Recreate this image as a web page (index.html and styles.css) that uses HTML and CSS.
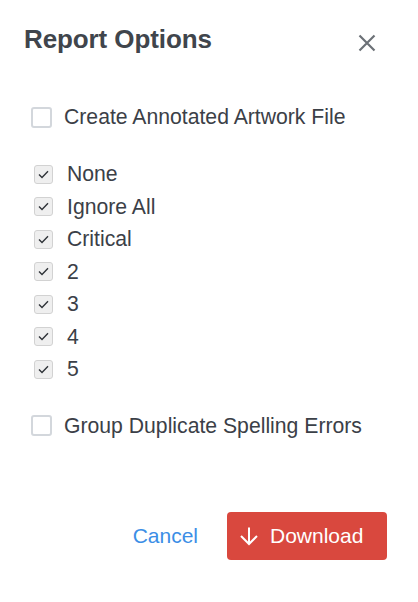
FILE: index.html
```html
<!DOCTYPE html>
<html>
<head>
<meta charset="utf-8">
<link rel="stylesheet" href="styles.css">
</head>
<body>
<div class="dialog">
  <header class="head">
    <h1 class="title">Report Options</h1>
    <button class="close" aria-label="Close">
      <svg width="18" height="18" viewBox="0 0 18 18"><path d="M1.5 1.5 L16.5 16.5 M16.5 1.5 L1.5 16.5" stroke="#6c7177" stroke-width="2.2" stroke-linecap="butt" fill="none"/></svg>
    </button>
  </header>

  <div class="body">
    <label class="opt first"><span class="box"></span><span class="label">Create Annotated Artwork File</span></label>

    <ul class="levels">
      <li class="level"><span class="cbox"><svg width="11" height="9" viewBox="0 0 11 9"><path d="M1 4.5 L4 7.4 L10 1.2" stroke="#2f3338" stroke-width="1.4" fill="none"/></svg></span><span class="label">None</span></li>
      <li class="level"><span class="cbox"><svg width="11" height="9" viewBox="0 0 11 9"><path d="M1 4.5 L4 7.4 L10 1.2" stroke="#2f3338" stroke-width="1.4" fill="none"/></svg></span><span class="label">Ignore All</span></li>
      <li class="level"><span class="cbox"><svg width="11" height="9" viewBox="0 0 11 9"><path d="M1 4.5 L4 7.4 L10 1.2" stroke="#2f3338" stroke-width="1.4" fill="none"/></svg></span><span class="label">Critical</span></li>
      <li class="level"><span class="cbox"><svg width="11" height="9" viewBox="0 0 11 9"><path d="M1 4.5 L4 7.4 L10 1.2" stroke="#2f3338" stroke-width="1.4" fill="none"/></svg></span><span class="label">2</span></li>
      <li class="level"><span class="cbox"><svg width="11" height="9" viewBox="0 0 11 9"><path d="M1 4.5 L4 7.4 L10 1.2" stroke="#2f3338" stroke-width="1.4" fill="none"/></svg></span><span class="label">3</span></li>
      <li class="level"><span class="cbox"><svg width="11" height="9" viewBox="0 0 11 9"><path d="M1 4.5 L4 7.4 L10 1.2" stroke="#2f3338" stroke-width="1.4" fill="none"/></svg></span><span class="label">4</span></li>
      <li class="level"><span class="cbox"><svg width="11" height="9" viewBox="0 0 11 9"><path d="M1 4.5 L4 7.4 L10 1.2" stroke="#2f3338" stroke-width="1.4" fill="none"/></svg></span><span class="label">5</span></li>
    </ul>

    <label class="opt group"><span class="box"></span><span class="label">Group Duplicate Spelling Errors</span></label>
  </div>

  <footer class="foot">
    <button class="cancel">Cancel</button>
    <button class="download">
      <svg width="20" height="20" viewBox="0 0 20 20"><path d="M10 1.5 V18 M2 10 L10 18 L18 10" stroke="#ffffff" stroke-width="2" fill="none"/></svg>
      <span>Download</span>
    </button>
  </footer>
</div>
</body>
</html>
```
FILE: styles.css
```css
* { box-sizing: border-box; }
html, body { margin: 0; padding: 0; background: #ffffff; }
body {
  font-family: "Liberation Sans", Arial, sans-serif;
  color: #3b4047;
  width: 418px;
  height: 602px;
  overflow: hidden;
}
.dialog {
  display: flex;
  flex-direction: column;
}
.head {
  display: flex;
  align-items: center;
  justify-content: space-between;
  margin-top: 24px;
  padding-left: 24px;
  padding-right: 42px;
  height: 30px;
}
.title {
  margin: 0;
  font-size: 26px;
  line-height: 30px;
  font-weight: 700;
  color: #40454c;
  letter-spacing: -0.1px;
}
.close {
  border: 0;
  background: transparent;
  padding: 0;
  width: 18px;
  height: 18px;
  display: flex;
  margin-top: 8px;
}
.body {
  padding-left: 31px;
  display: flex;
  flex-direction: column;
}
.opt {
  display: flex;
  align-items: center;
  gap: 12px;
  height: 32px;
  font-size: 21.2px;
}
.opt.first { margin-top: 47px; }
.opt.group { margin-top: 24px; }
.box {
  width: 21px;
  height: 21px;
  border: 2px solid #d3d7dc;
  border-radius: 3px;
  background: #fff;
  flex: none;
}
.levels {
  list-style: none;
  margin: 25px 0 0 0;
  padding: 0 0 0 3px;
  display: flex;
  flex-direction: column;
}
.level {
  display: flex;
  align-items: center;
  gap: 14px;
  height: 32.5px;
  font-size: 21.2px;
}
.cbox {
  width: 19px;
  height: 19px;
  border: 1.5px solid #d2d2d2;
  border-radius: 3px;
  background: #efefef;
  display: flex;
  align-items: center;
  justify-content: center;
  flex: none;
}
.label { line-height: 24px; }
.foot {
  display: flex;
  justify-content: flex-end;
  align-items: center;
  gap: 29px;
  padding-right: 31px;
  margin-top: 70px;
}
.cancel {
  border: 0;
  background: transparent;
  padding: 0;
  font-family: inherit;
  font-size: 21px;
  color: #3b8ee6;
}
.download {
  width: 160px;
  height: 48px;
  border: 0;
  border-radius: 4px;
  background: #d9483e;
  color: #ffffff;
  font-family: inherit;
  font-size: 21px;
  display: flex;
  align-items: center;
  padding: 0 0 0 12px;
  gap: 11px;
}
.download svg { flex: none; }
```
